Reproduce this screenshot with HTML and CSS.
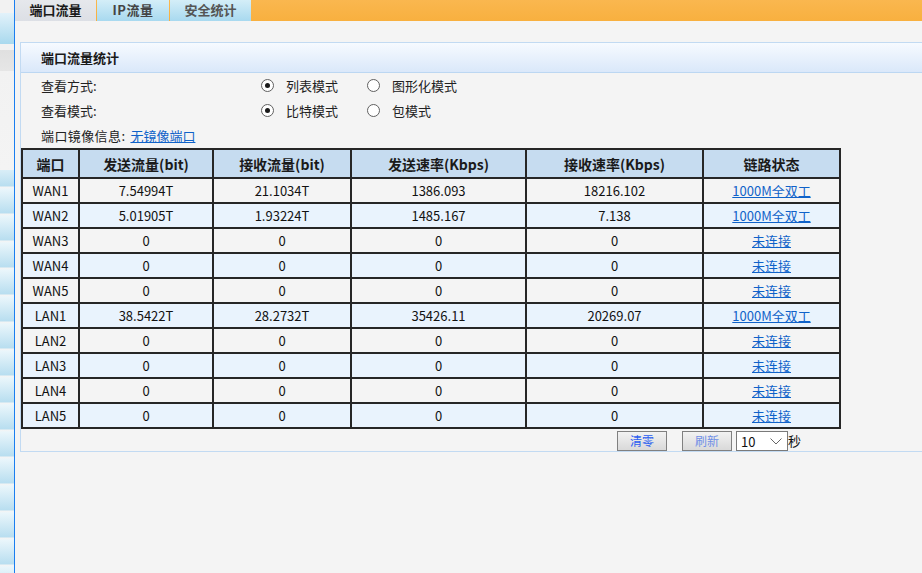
FILE: index.html
```html
<!DOCTYPE html>
<html lang="zh-CN">
<head>
<meta charset="utf-8">
<title>端口流量</title>
<link rel="stylesheet" href="styles.css">
</head>
<body>
<div class="page">
  <aside class="side"></aside>
  <main class="main">
    <nav class="tabs">
      <span class="tab tab-active">端口流量</span>
      <span class="tab tab-ip">IP流量</span>
      <span class="tab tab-dim">安全统计</span>
    </nav>
    <section class="panel">
      <h2 class="panel-title">端口流量统计</h2>
      <div class="opts">
        <div class="opt-row">
          <span class="opt-label">查看方式:</span>
          <span class="opt"><span class="radio radio-on"></span>列表模式</span>
          <span class="opt"><span class="radio"></span>图形化模式</span>
        </div>
        <div class="opt-row">
          <span class="opt-label">查看模式:</span>
          <span class="opt"><span class="radio radio-on"></span>比特模式</span>
          <span class="opt"><span class="radio"></span>包模式</span>
        </div>
        <div class="opt-row opt-row-last">
          <span class="mirror">端口镜像信息:</span><a class="link mirror-link" href="#">无镜像端口</a>
        </div>
      </div>
      <table class="grid">
        <thead>
          <tr>
            <th class="c1">端口</th>
            <th class="c2">发送流量(bit)</th>
            <th class="c3">接收流量(bit)</th>
            <th class="c4">发送速率(Kbps)</th>
            <th class="c5">接收速率(Kbps)</th>
            <th class="c6">链路状态</th>
          </tr>
        </thead>
        <tbody>
          <tr><td>WAN1</td><td>7.54994T</td><td>21.1034T</td><td>1386.093</td><td>18216.102</td><td><a class="link" href="#">1000M全双工</a></td></tr>
          <tr><td>WAN2</td><td>5.01905T</td><td>1.93224T</td><td>1485.167</td><td>7.138</td><td><a class="link" href="#">1000M全双工</a></td></tr>
          <tr><td>WAN3</td><td>0</td><td>0</td><td>0</td><td>0</td><td><a class="link" href="#">未连接</a></td></tr>
          <tr><td>WAN4</td><td>0</td><td>0</td><td>0</td><td>0</td><td><a class="link" href="#">未连接</a></td></tr>
          <tr><td>WAN5</td><td>0</td><td>0</td><td>0</td><td>0</td><td><a class="link" href="#">未连接</a></td></tr>
          <tr><td>LAN1</td><td>38.5422T</td><td>28.2732T</td><td>35426.11</td><td>20269.07</td><td><a class="link" href="#">1000M全双工</a></td></tr>
          <tr><td>LAN2</td><td>0</td><td>0</td><td>0</td><td>0</td><td><a class="link" href="#">未连接</a></td></tr>
          <tr><td>LAN3</td><td>0</td><td>0</td><td>0</td><td>0</td><td><a class="link" href="#">未连接</a></td></tr>
          <tr><td>LAN4</td><td>0</td><td>0</td><td>0</td><td>0</td><td><a class="link" href="#">未连接</a></td></tr>
          <tr><td>LAN5</td><td>0</td><td>0</td><td>0</td><td>0</td><td><a class="link" href="#">未连接</a></td></tr>
        </tbody>
      </table>
      <div class="controls">
        <button class="btn btn-clear" type="button">清零</button>
        <button class="btn btn-refresh" type="button">刷新</button>
        <div class="select">
          <span>10</span>
          <svg class="chev" width="12" height="7" viewBox="0 0 12 7"><path d="M0.5 0.5 L6 6 L11.5 0.5" fill="none" stroke="#666" stroke-width="1"/></svg>
        </div>
        <span class="unit">秒</span>
      </div>
    </section>
  </main>
</div>
</body>
</html>
```
FILE: styles.css
```css
* { box-sizing: border-box; }
html, body { margin: 0; padding: 0; }
body {
  font-family: "Noto Sans CJK SC", "Noto Sans", sans-serif;
  font-size: 13px;
  color: #1a1a1a;
  background: #f4f4f4;
}
.page {
  display: flex;
  height: 573px;
  overflow: hidden;
}
.side {
  width: 15px;
  flex: none;
  border-right: 1px solid #1a7ef0;
  background:
    linear-gradient(to bottom, #f2f2f2 0, #f2f2f2 13px, #e2f2fa 13px, #a9d9ee 44px, #f2f2f2 44px, #f2f2f2 50px, #e0e0e0 50px, #e6e6e6 71px, #f2f2f2 71px, #f4f4f4 170px, transparent 170px) no-repeat,
    repeating-linear-gradient(to bottom, #eaf6fb 0, #b8def0 24px, #f4f4f4 25px, #eaf6fb 27px);
  background-color: #c6ddf0;
}
.main {
  flex: 1;
  min-width: 0;
  background: #f4f4f4;
}
.tabs {
  display: flex;
  height: 21px;
  background: linear-gradient(to bottom, #fab74f, #f8b03f);
}
.tab {
  width: 81px;
  height: 21px;
  line-height: 20px;
  text-align: center;
  margin-right: 1px;
  font-weight: bold;
  font-size: 13px;
  color: #444;
  background: linear-gradient(to bottom, #d4eef8, #a8d9ef);
}
.tab-ip { width: 72px; letter-spacing: 0.5px; }
.tab-active {
  color: #1a1a1a;
  background: linear-gradient(to bottom, #e6e8ec, #dcdfe5);
}
.tab-dim { color: #555; }
.panel {
  margin: 21px 0 0 5px;
  border: 1px solid #c2daf2;
  border-right: none;
}
.panel-title {
  margin: 0;
  height: 30px;
  line-height: 29px;
  padding-left: 20px;
  font-size: 13px;
  font-weight: bold;
  color: #1a1a1a;
  border-bottom: 1px solid #bcd7f2;
  background: linear-gradient(to bottom, #f6faff, #dae8fa);
}
.opts { padding-left: 20px; }
.opt-row {
  display: flex;
  align-items: center;
  height: 25px;
}
.opt-row-last { height: 24px; }
.opt-label { width: 220px; flex: none; color: #222; }
.opt {
  display: flex;
  align-items: center;
  width: 106px;
  flex: none;
  color: #222;
}
.radio {
  width: 13px;
  height: 13px;
  border: 1px solid #606060;
  border-radius: 50%;
  background: #fff;
  margin-right: 12px;
  display: flex;
  align-items: center;
  justify-content: center;
}
.radio-on::after {
  content: "";
  width: 5px;
  height: 5px;
  border-radius: 50%;
  background: #1a1a1a;
}
.mirror { color: #222; letter-spacing: 0.4px; }
.mirror-link { margin-left: 5px; }
.link {
  color: #0f62c9;
  text-decoration: underline;
}
.grid {
  margin-top: 1px;
  width: 820px;
  table-layout: fixed;
  border-collapse: separate;
  border-spacing: 2px;
  background: #262626;
}
.grid th, .grid td {
  padding: 0;
  text-align: center;
  white-space: nowrap;
}
.grid th {
  height: 27px;
  font-size: 14px;
  font-weight: bold;
  background: #c6dcf0;
  color: #1a1a1a;
}
.grid td {
  height: 23px;
  font-size: 13px;
  background: #f4f4f4;
  color: #111;
}
.grid tbody tr:nth-child(even) td { background: #e9f3fd; }
.c1 { width: 55px; }
.c2 { width: 132px; }
.c3 { width: 136px; }
.c4 { width: 173px; }
.c5 { width: 175px; }
.c6 { width: 135px; }
.controls {
  display: flex;
  align-items: flex-start;
  justify-content: flex-end;
  width: 820px;
  padding: 2px 40px 0 0;
  height: 22px;
}
.btn {
  width: 50px;
  height: 20px;
  padding: 0;
  border: 1px solid #808080;
  background: linear-gradient(to bottom, #f2f2f2, #d9d9d9);
  font-family: inherit;
  font-size: 12px;
  line-height: 18px;
}
.btn-clear { color: #2a5ef0; margin-right: 15px; }
.btn-refresh { color: #6f8fe6; margin-right: 4px; }
.select {
  width: 52px;
  height: 20px;
  border: 1px solid #7a7a7a;
  background: #fff;
  display: flex;
  align-items: center;
  justify-content: space-between;
  padding: 0 5px 0 4px;
  font-size: 13px;
  color: #111;
}
.chev { display: block; }
.unit { font-size: 13px; line-height: 20px; color: #111; }
```
